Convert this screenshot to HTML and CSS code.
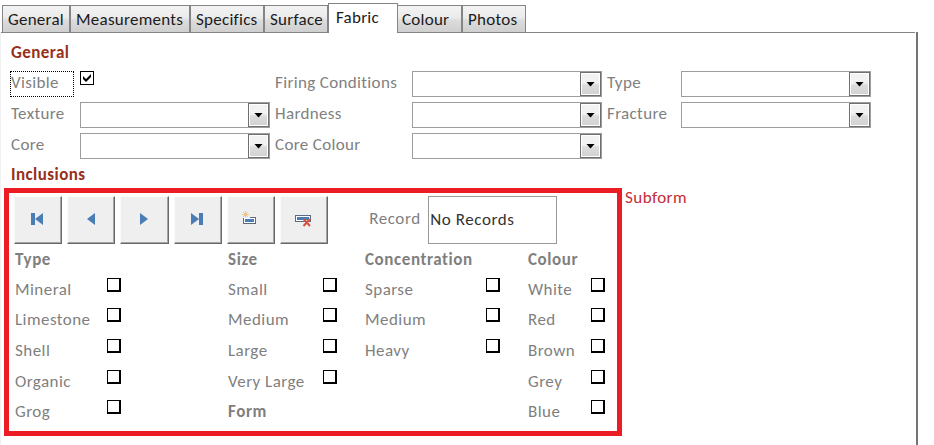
FILE: index.html
```
<!DOCTYPE html>
<html lang="en">
<head>
<meta charset="utf-8">
<title>Fabric</title>
<link rel="stylesheet" href="styles.css">
</head>
<body>
<nav class="tabs">
  <span class="tab t-general">General</span><span class="tab t-measurements">Measurements</span><span class="tab t-specifics">Specifics</span><span class="tab t-surface">Surface</span><span class="tab active">Fabric</span><span class="tab t-colour">Colour</span><span class="tab t-photos">Photos</span>
</nav>
<main class="page">
  <h2 class="section">General</h2>
  <div class="fields">
    <label class="focused">Visible</label><span class="check checked"><svg viewBox="0 0 14 14"><path d="M3 5v3l3 3 5-5V3L6 8z"/></svg></span>
    <label>Firing Conditions</label><span class="combo"><i></i></span>
    <label>Type</label><span class="combo"><i></i></span>
    <label>Texture</label><span class="combo"><i></i></span>
    <label>Hardness</label><span class="combo"><i></i></span>
    <label>Fracture</label><span class="combo"><i></i></span>
    <label>Core</label><span class="combo"><i></i></span>
    <label>Core Colour</label><span class="combo"><i></i></span>
  </div>
  <h2 class="section inclusions">Inclusions</h2>
  <div class="sub-row">
    <section class="subform">
      <div class="toolbar">
        <button class="nav"><svg viewBox="0 0 48 48"><path d="M17 17h4v12h-4zM29 17v12l-8-6z"/></svg></button>
        <button class="nav"><svg viewBox="0 0 48 48"><path d="M28 17v12l-8-6z"/></svg></button>
        <button class="nav"><svg viewBox="0 0 48 48"><path d="M20 17v12l8-6z"/></svg></button>
        <button class="nav"><svg viewBox="0 0 48 48"><path d="M17 17v12l8-6zM25 17h4v12h-4z"/></svg></button>
        <button class="nav"><svg viewBox="0 0 48 48"><path class="slate" d="M16 21h13v7H16z"/><path class="white" d="M17 22h11v5H17z"/><path class="face" d="M15 15h8v7h-8z"/><path d="M18 23h9v3h-9z"/><path class="spark" d="M18.500 15v7M15 18.500h7M16 16l5 5M21 16l-5 5"/></svg></button>
        <button class="nav"><svg viewBox="0 0 48 48"><path class="slate" d="M15 19h16v7H15z"/><path class="white" d="M16 20h14v5H16z"/><path d="M17 21h12v3H17z"/><path class="cross" d="M23.500 23l6.500 7M30 23l-6.500 7"/></svg></button>
        <label class="record">Record</label><span class="value">No Records</span>
      </div>
      <div class="options">
        <div class="col c1"><b>Type</b><b></b>
          <span>Mineral</span><i class="check"></i><span>Limestone</span><i class="check"></i><span>Shell</span><i class="check"></i><span>Organic</span><i class="check"></i><span>Grog</span><i class="check"></i></div>
        <div class="col c2"><b>Size</b><b></b>
          <span>Small</span><i class="check"></i><span>Medium</span><i class="check"></i><span>Large</span><i class="check"></i><span>Very Large</span><i class="check"></i><b class="form">Form</b></div>
        <div class="col c3"><b class="wide">Concentration</b>
          <span>Sparse</span><i class="check"></i><span>Medium</span><i class="check"></i><span>Heavy</span><i class="check"></i></div>
        <div class="col c4"><b>Colour</b><b></b>
          <span>White</span><i class="check"></i><span>Red</span><i class="check"></i><span>Brown</span><i class="check"></i><span>Grey</span><i class="check"></i><span>Blue</span><i class="check"></i></div>
      </div>
    </section>
    <span class="note">Subform</span>
  </div>
</main>
</body>
</html>
```
FILE: styles.css
```
* { box-sizing: border-box; }
body {
  margin: 0;
  width: 934px;
  height: 445px;
  overflow: hidden;
  background: #fff;
  font: 17px/20px Carlito, Calibri, Lato, sans-serif;
  font-variant-ligatures: none;
  letter-spacing: 0.35px;
  color: #7f7f7f;
  white-space: nowrap;
}
.tabs {
  display: flex;
  align-items: flex-end;
  width: 915px;
  height: 33px;
  padding-left: 2px;
  background: linear-gradient(#858589, #858589) bottom / 100% 1px no-repeat;
}
.tab {
  height: 28px;
  padding: 4px 0 0 5px;
  border: 1px solid #858589;
  background: linear-gradient(#f3f3f3 0%, #ebebeb 45%, #dcdcdc 55%, #cfcfcf 100%);
  color: #1c1c1c;
  letter-spacing: 0.25px;
}
.t-general { width: 68px; }
.t-measurements { width: 120px; }
.t-specifics { width: 74px; }
.t-surface { width: 64px; }
.t-colour { width: 64px; border-left: 0; padding-left: 4px; }
.t-photos { width: 64px; }
.active {
  width: 70px;
  height: 30px;
  border-bottom: 0;
  padding-left: 7px;
  background: #fff;
}
.page {
  width: 918px;
  height: 413px;
  margin-top: -1px;
  padding: 1px 0 0 10px;
  border-right: 2px solid #747474;
  border-left: 1px solid #efeff1;
}
.section {
  height: 38px;
  margin: 0;
  padding-top: 10px;
  font-size: 17px;
  line-height: 20px;
  letter-spacing: 0.45px;
  color: #98301a;
}
.fields {
  display: grid;
  grid-template-columns: 69px 195px 137px 195px 74px 190px;
  grid-auto-rows: 31px;
}
.fields label { padding-top: 2px; }
.fields .focused {
  width: 64px;
  height: 26px;
  margin-left: -1px;
  padding: 1px 0 0;
  border: 1px dotted #000;
}
.check {
  display: block;
  width: 14px;
  height: 14px;
  border: solid #000;
  border-width: 1px 2px 2px 1px;
  background: #fff;
}
.checked { border-width: 1px; }
.checked svg { display: block; width: 14px; height: 14px; margin: -1px; }
.combo {
  display: flex;
  justify-content: flex-end;
  width: 190px;
  height: 26px;
  border: 1px solid #9d9d9d;
}
.combo i {
  display: grid;
  place-items: center;
  width: 21px;
  height: 24px;
  border: 1px solid #6f6f6f;
  box-shadow: inset 0 0 0 1px #fff;
  background: linear-gradient(#f2f2f2 45%, #dcdcdc 55%, #d2d2d2);
}
.combo i::after {
  content: "";
  width: 9px;
  height: 5px;
  background: #000;
  clip-path: polygon(0 0, 100% 0, 50% 100%);
}
.inclusions { height: 24px; padding-top: 1px; }
.sub-row { display: flex; gap: 3px; margin: 0 0 0 -7px; }
.subform {
  width: 618px;
  height: 248px;
  border: 5px solid #ec1c24;
  padding: 3px 0 0 5px;
}
.toolbar { display: flex; gap: 5px; height: 48px; }
.nav {
  width: 48.2px;
  height: 48px;
  padding: 0;
  border: solid;
  border-width: 1px;
  border-color: #fafafa #686868 #686868 #fafafa;
  box-shadow: inset -1px -1px #a5a5a5;
  background: #efefef;
}
.nav svg { display: block; width: 48px; height: 48px; margin: -1px; fill: #4a7db5; }
.nav .slate { fill: #5b6b7d; }
.nav .white { fill: #fff; }
.nav .face { fill: #efefef; }
.nav .spark { fill: none; stroke: #edbd72; stroke-width: 0.8; }
.nav .cross { fill: none; stroke: #d5503e; stroke-width: 2; }
.record { width: 54px; margin-left: 36px; padding-top: 13px; letter-spacing: 0.6px; }
.value {
  width: 129px;
  padding: 13px 0 0 1px;
  border: 1px solid #999;
  color: #333;
  letter-spacing: 0.6px;
}
.options {
  display: grid;
  grid-template-columns: 213px 137px 163px 80px;
  padding: 5px 0 0 1px;
  letter-spacing: 0.45px;
}
.col {
  display: grid;
  grid-template-rows: 29px 30px 31px 31px 30px 24px;
  align-content: start;
}
.c1 { grid-template-columns: 92px 14px; }
.c2 { grid-template-columns: 95px 14px; }
.c3 { grid-template-columns: 121px 14px; }
.c4 { grid-template-columns: 63px 14px; }
.col b { padding-top: 1px; letter-spacing: 0.6px; }
.col span, .col .form { padding-top: 2px; }
.wide { grid-column: span 2; }
.note { color: #c52b38; letter-spacing: 0.45px; }
```
